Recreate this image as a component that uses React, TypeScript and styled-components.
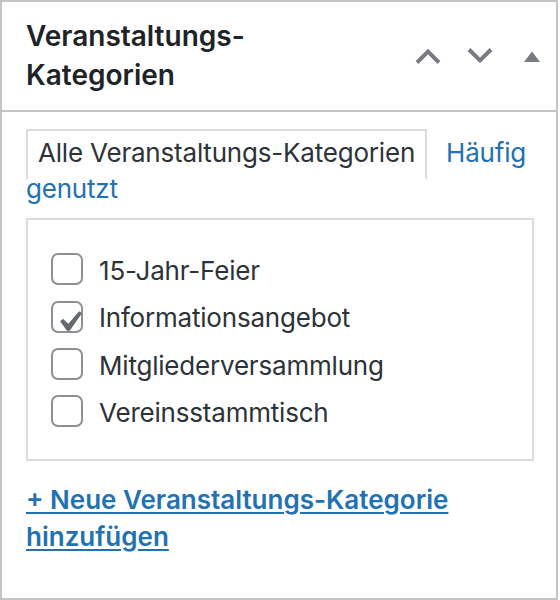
import React from "react";
import styled, { createGlobalStyle } from "styled-components";

const GlobalStyle = createGlobalStyle`
  html, body {
    margin: 0;
    padding: 0;
    background: #fff;
  }
  body {
    font-family: Inter, "Noto Sans", Roboto, sans-serif;
    -webkit-font-smoothing: antialiased;
  }
`;

const Postbox = styled.div`
  box-sizing: border-box;
  width: 558px;
  height: 600px;
  border: 2px solid #c3c4c7;
  background: #fff;
  color: #1d2327;
`;

const Header = styled.div`
  display: flex;
  align-items: center;
  border-bottom: 2px solid #c3c4c7;
`;

const Title = styled.h2`
  flex: 1;
  margin: 0;
  padding: 15px 90px 15px 24px;
  font-size: 28px;
  font-weight: 600;
  line-height: 39px;
  color: #1d2327;
`;

const Actions = styled.div`
  display: flex;
  flex: none;
`;

const HandleButton = styled.button`
  display: flex;
  align-items: center;
  justify-content: center;
  width: 52px;
  height: 52px;
  padding: 0 0 0 4px;
  border: none;
  background: none;
  cursor: pointer;
`;

const Inside = styled.div`
  padding: 0 22px 0 24px;
`;

const TabBar = styled.ul`
  margin: 23px 0 0;
  padding: 0;
  list-style: none;
  font-size: 26px;
  line-height: 36.4px;
  letter-spacing: -0.2px;
`;

const Tab = styled.li<{ $active?: boolean }>`
  display: inline;
  color: ${(p) => (p.$active ? "#2c3338" : "#2271b1")};
  ${(p) =>
    p.$active &&
    `
    padding: 6px 10px 10px;
    margin-right: 19px;
    border: 2px solid #dcdcde;
    border-bottom-color: #fff;
  `}
`;

const TabLink = styled.a`
  color: inherit;
  text-decoration: none;
`;

const Panel = styled.div`
  margin-top: 10px;
  border: 2px solid #dcdcde;
  padding: 0 23px;
`;

const Checklist = styled.ul`
  margin: 26px 0 24px;
  padding: 0;
  list-style: none;
`;

const Item = styled.li`
  display: flex;
  align-items: center;
  gap: 16px;
  height: 47.33px;
  font-size: 26px;
  letter-spacing: -0.2px;
  color: #2c3338;
`;

const Checkbox = styled.span`
  position: relative;
  box-sizing: border-box;
  flex: none;
  width: 32px;
  height: 32px;
  border: 2px solid #8c8f94;
  border-radius: 7px;
  background: #fff;
`;

const CheckMark = styled.svg`
  position: absolute;
  left: -5px;
  top: -2px;
  width: 42px;
  height: 42px;
`;

const Label = styled.span`
  transform: translateY(1px);
`;

const AddLink = styled.a`
  display: block;
  margin-top: 21px;
  font-size: 26px;
  font-weight: 600;
  line-height: 36.4px;
  color: #2271b1;
  text-decoration: underline;
  text-decoration-thickness: 2px;
  text-underline-offset: 3px;
`;

const categories = [
  { name: "15-Jahr-Feier", checked: false },
  { name: "Informationsangebot", checked: true },
  { name: "Mitgliederversammlung", checked: false },
  { name: "Vereinsstammtisch", checked: false },
];

const ChevronUp = () => (
  <svg width="28" height="16" viewBox="0 0 28 16">
    <polyline points="3,14.5 14,3.5 25,14.5" fill="none" stroke="#787c82" strokeWidth="4" />
  </svg>
);

const ChevronDown = () => (
  <svg width="28" height="16" viewBox="0 0 28 16">
    <polyline points="3,1.5 14,12.5 25,1.5" fill="none" stroke="#787c82" strokeWidth="4" />
  </svg>
);

const Triangle = () => (
  <svg width="16" height="11" viewBox="0 0 16 11">
    <polygon points="0,11 8,0.5 16,11" fill="#787c82" />
  </svg>
);

const App = () => {
  return (
    <>
      <GlobalStyle />
      <Postbox>
        <Header>
          <Title>Veranstaltungs-Kategorien</Title>
          <Actions>
            <HandleButton aria-label="Nach oben verschieben">
              <ChevronUp />
            </HandleButton>
            <HandleButton aria-label="Nach unten verschieben">
              <ChevronDown />
            </HandleButton>
            <HandleButton aria-label="Bedienfeld umschalten">
              <Triangle />
            </HandleButton>
          </Actions>
        </Header>
        <Inside>
          <TabBar>
            <Tab $active>
              <TabLink href="#">Alle Veranstaltungs-Kategorien</TabLink>
            </Tab>
            <Tab>
              <TabLink href="#">Häufig genutzt</TabLink>
            </Tab>
          </TabBar>
          <Panel>
            <Checklist>
              {categories.map((cat) => (
                <Item key={cat.name}>
                  <Checkbox>
                    {cat.checked && (
                      <CheckMark viewBox="0 0 20 20">
                        <path
                          d="M14.83 4.89l1.34.94-5.81 8.38H9.02L5.78 9.67l1.34-1.25 2.57 2.4z"
                          fill="#646970"
                        />
                      </CheckMark>
                    )}
                  </Checkbox>
                  <Label>{cat.name}</Label>
                </Item>
              ))}
            </Checklist>
          </Panel>
          <AddLink href="#">+ Neue Veranstaltungs-Kategorie hinzufügen</AddLink>
        </Inside>
      </Postbox>
    </>
  );
};

export default App;
